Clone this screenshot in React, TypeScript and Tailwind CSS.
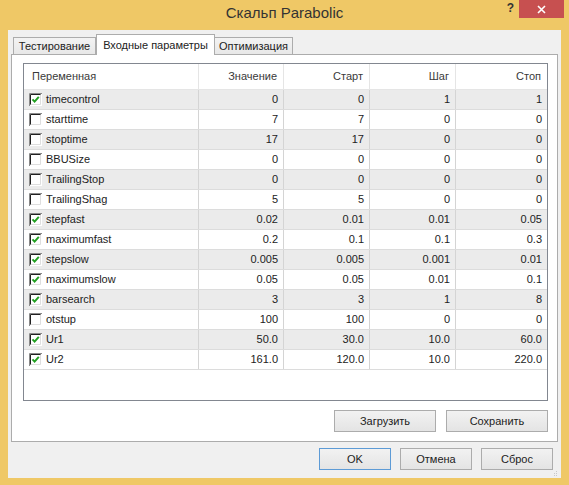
import React from "react";

type Row = { name: string; on: boolean; v: string[] };

const rows: Row[] = [
  { name: "timecontrol", on: true, v: ["0", "0", "1", "1"] },
  { name: "starttime", on: false, v: ["7", "7", "0", "0"] },
  { name: "stoptime", on: false, v: ["17", "17", "0", "0"] },
  { name: "BBUSize", on: false, v: ["0", "0", "0", "0"] },
  { name: "TrailingStop", on: false, v: ["0", "0", "0", "0"] },
  { name: "TrailingShag", on: false, v: ["5", "5", "0", "0"] },
  { name: "stepfast", on: true, v: ["0.02", "0.01", "0.01", "0.05"] },
  { name: "maximumfast", on: true, v: ["0.2", "0.1", "0.1", "0.3"] },
  { name: "stepslow", on: true, v: ["0.005", "0.005", "0.001", "0.01"] },
  { name: "maximumslow", on: true, v: ["0.05", "0.05", "0.01", "0.1"] },
  { name: "barsearch", on: true, v: ["3", "3", "1", "8"] },
  { name: "otstup", on: false, v: ["100", "100", "0", "0"] },
  { name: "Ur1", on: true, v: ["50.0", "30.0", "10.0", "60.0"] },
  { name: "Ur2", on: true, v: ["161.0", "120.0", "10.0", "220.0"] },
];

function Check({ on }: { on: boolean }) {
  return (
    <svg width="13" height="13" viewBox="0 0 13 13" className="shrink-0">
      <rect x="0" y="0" width="13" height="13" fill="#ffffff" />
      <path d="M0.5 13 L0.5 0.5 L13 0.5" fill="none" stroke="#8a8a8a" />
      <path d="M1.5 12 L1.5 1.5 L12 1.5" fill="none" stroke="#202020" />
      <path d="M1.5 11.5 L11.5 11.5 L11.5 1.5" fill="none" stroke="#dedede" />
      {on && (
        <polyline
          points="3.5,6.4 5.6,8.6 9.8,3.8"
          fill="none"
          stroke="#22a022"
          strokeWidth="2"
        />
      )}
    </svg>
  );
}

function Btn({ label, w, primary }: { label: string; w: string; primary?: boolean }) {
  return (
    <div
      className={`${w} h-[22px] flex items-center justify-center text-[11px] text-[#222] border bg-gradient-to-b from-[#f2f2f2] to-[#e4e4e4] ${
        primary ? "border-[#5d9bd6]" : "border-[#acacac]"
      }`}
    >
      {label}
    </div>
  );
}

export default function App() {
  return (
    <div className="w-[569px] h-[485px] bg-[#efc866] flex flex-col font-['Liberation_Sans',Arial,sans-serif] overflow-hidden">
      {/* title bar */}
      <div className="h-[30px] grid grid-cols-[1fr_auto_1fr] shrink-0">
        <div />
        <div className="text-[15px] text-[#333] leading-none pt-[5px]">Скальп Parabolic</div>
        <div className="flex justify-end items-start pr-[5px]">
          <div className="text-[12px] font-bold text-[#333] leading-none mt-[2px] mr-[5px]">?</div>
          <div className="w-[45px] h-[18px] bg-[#c75050] flex items-center justify-center">
            <svg width="9" height="9" viewBox="0 0 9 9">
              <path d="M1 1 L8 8 M8 1 L1 8" stroke="#ffffff" strokeWidth="1.6" />
            </svg>
          </div>
        </div>
      </div>

      {/* client area */}
      <div className="mx-[8px] mb-[7px] flex-1 bg-[#f0f0f0] flex flex-col px-[3px] pt-[4px]">
        {/* tabs */}
        <div className="h-[20px] flex items-end pl-[2px] shrink-0 text-[11px] text-[#222]">
          <div className="w-[83px] h-[17px] border border-b-0 border-[#acacac] bg-gradient-to-b from-[#f3f3f3] to-[#e8e8e8] flex items-center justify-center">
            Тестирование
          </div>
          <div className="w-[119px] h-[21px] -mb-[1px] border border-b-0 border-[#acacac] bg-white flex items-start justify-center pt-[2px] relative z-10">
            Входные параметры
          </div>
          <div className="w-[78px] h-[17px] border border-b-0 border-l-0 border-[#acacac] bg-gradient-to-b from-[#f3f3f3] to-[#e8e8e8] flex items-center justify-center">
            Оптимизация
          </div>
        </div>

        {/* panel */}
        <div className="h-[388px] w-[547px] border border-[#acacac] bg-white flex flex-col pl-[11px] pr-[9px] pt-[8px] shrink-0">
          <div className="h-[338px] border border-[#828790] bg-white flex flex-col text-[11px]">
            {/* header */}
            <div className="h-[26px] flex border-b border-[#e5e5e5] text-[#3a3a3a] shrink-0">
              <div className="w-[175px] border-r border-[#e5e5e5] flex items-center pl-[8px]">Переменная</div>
              <div className="w-[85px] border-r border-[#e5e5e5] flex items-center justify-end pr-[6px]">Значение</div>
              <div className="w-[86px] border-r border-[#e5e5e5] flex items-center justify-end pr-[6px]">Старт</div>
              <div className="w-[86px] border-r border-[#e5e5e5] flex items-center justify-end pr-[6px]">Шаг</div>
              <div className="flex-1 flex items-center justify-end pr-[6px]">Стоп</div>
            </div>
            {rows.map((r, i) => (
              <div
                key={r.name}
                className={`h-[20px] flex border-b border-[#dcdcdc] text-[#222] shrink-0 ${
                  i % 2 === 0 ? "bg-[#ebebeb]" : "bg-white"
                }`}
              >
                <div className="w-[175px] border-r border-[#d4d4d4] flex items-center pl-[5px] gap-[4px]">
                  <Check on={r.on} />
                  <span>{r.name}</span>
                </div>
                <div className="w-[85px] border-r border-[#d4d4d4] flex items-center justify-end pr-[5px]">{r.v[0]}</div>
                <div className="w-[86px] border-r border-[#d4d4d4] flex items-center justify-end pr-[5px]">{r.v[1]}</div>
                <div className="w-[86px] border-r border-[#d4d4d4] flex items-center justify-end pr-[5px]">{r.v[2]}</div>
                <div className="flex-1 flex items-center justify-end pr-[5px]">{r.v[3]}</div>
              </div>
            ))}
          </div>
          <div className="flex justify-end gap-[10px] mt-[9px]">
            <Btn label="Загрузить" w="w-[102px]" />
            <Btn label="Сохранить" w="w-[102px]" />
          </div>
        </div>

        {/* bottom buttons */}
        <div className="flex-1 flex justify-end">
          <div className="flex gap-[9px] pt-[6px]">
            <Btn label="OK" w="w-[72px]" primary />
            <Btn label="Отмена" w="w-[72px]" />
            <Btn label="Сброс" w="w-[72px]" />
          </div>
          <div className="w-[5px] self-end mb-[1px]">
            <svg width="5" height="6" viewBox="0 0 5 6">
              <rect x="3" y="0" width="1" height="1" fill="#c8c8c8" />
              <rect x="1" y="2" width="1" height="1" fill="#c8c8c8" />
              <rect x="3" y="2" width="1" height="1" fill="#c8c8c8" />
              <rect x="1" y="4" width="1" height="1" fill="#c8c8c8" />
              <rect x="3" y="4" width="1" height="1" fill="#c8c8c8" />
            </svg>
          </div>
        </div>
      </div>
    </div>
  );
}
